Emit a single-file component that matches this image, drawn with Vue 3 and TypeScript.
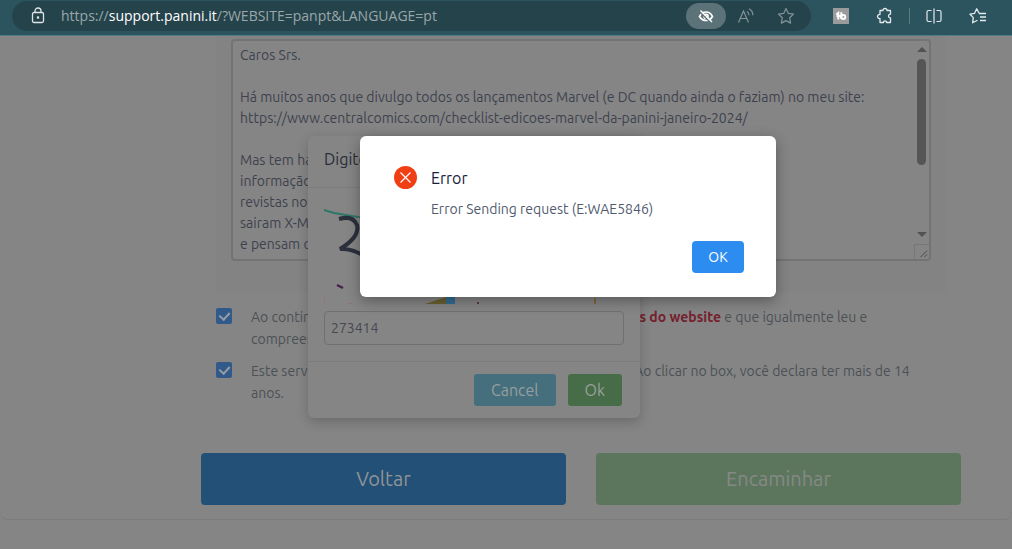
<script setup lang="ts">
import { ref } from 'vue'

const request = ref(`Caros Srs.

Há muitos anos que divulgo todos os lançamentos Marvel (e DC quando ainda o faziam) no meu site:
https://www.centralcomics.com/checklist-edicoes-marvel-da-panini-janeiro-2024/

Mas tem havido falta de comunicação, e há meses que a Panini já não nos manda a
informação das edições com a antecedência, e os leitores é que dizem que já sairam
revistas nos quiosques que nunca divulgaram. Muita gente está convencida que
sairam X-Men e outras revistas que foram anunciadas antes, mas nunca sairam,
e pensam que a culpa é dos sites de divulgação, e as lojas também não`)
const code = ref('273414')
const terms = ref(true)
const adult = ref(true)
</script>

<template>
  <div class="screen">
    <header class="toolbar">
      <div class="address">
        <svg class="lock" width="14" height="18" viewBox="0 0 14 18" fill="none" stroke="#dfe5e6" stroke-width="1.3">
          <rect x="1.5" y="5.500" width="11" height="10" rx="1.500" />
          <path d="M4 5.500V4a3 3 0 0 1 6 0v1.500" />
          <rect x="6.500" y="10" width="1" height="1" />
        </svg>
        <span class="url">https://<b>support.panini.it</b>/?WEBSITE=panpt&amp;LANGUAGE=pt</span>
        <button class="tool pill" aria-label="Tracking">
          <svg width="16" height="16" viewBox="0 0 16 16" fill="none" stroke="#fff" stroke-width="1.700">
            <path d="M1.500 8.500C3 5.300 5.200 4 8 4s5 1.300 6.500 4.500C13 11 11 12.500 8 12.500S3 11 1.500 8.500z" />
            <circle cx="8" cy="8.300" r="2" />
            <path d="M1.500 3.500l11 11" stroke="#5b7278" stroke-width="1.500" />
            <path d="M2.500 2.500l11.500 11.500" stroke-width="1.400" />
          </svg>
        </button>
        <button class="tool" aria-label="Read aloud">
          <svg width="18" height="18" viewBox="0 0 18 18" fill="none" stroke="#829397" stroke-width="1.200">
            <path d="M1.500 15.500L6.500 4L11.500 15.500M3.500 11.500h6M10 4.500q2 1.200 2 3.800M12 1.800q4 2 3.800 6.500" />
          </svg>
        </button>
        <button class="tool" aria-label="Favourite">
          <svg width="18" height="18" viewBox="0 0 18 18" fill="none" stroke="#829397" stroke-width="1.200" stroke-linejoin="round">
            <path d="M9 1.500l2.300 4.900 5.200.7-3.800 3.700.9 5.300L9 13.600l-4.600 2.500.9-5.300L1.500 7.100l5.200-.7z" />
          </svg>
        </button>
      </div>
      <nav class="extras">
        <button class="tool" aria-label="Extension">
          <svg width="16" height="16" viewBox="0 0 16 16">
            <rect width="16" height="16" fill="#9b9b9b" />
            <path d="M3.300 6.500L5.300 5v6.500M3.500 8h4M8.300 4.200v6.800" fill="none" stroke="#fff" stroke-width="2" />
            <circle cx="10.300" cy="9" r="2" fill="none" stroke="#fff" stroke-width="1.900" />
          </svg>
        </button>
        <button class="tool" aria-label="Extensions">
          <svg width="18" height="18" viewBox="0 0 18 18" fill="none" stroke="#e4eaeb" stroke-width="1.300" stroke-linejoin="round">
            <path d="M4 3.500h3c-.5-2.700 4.500-2.700 4 0h3.500v3.700c-2.600-.4-2.600 4 0 3.600v4.700h-4c.4-2.300-3.400-2.300-3 0H4v-4c-3.300.6-3.300-4.600 0-4z" />
          </svg>
        </button>
        <i class="rule"></i>
        <button class="tool" aria-label="Split screen">
          <svg width="16" height="16" viewBox="0 0 16 16" fill="none" stroke="#e4eaeb" stroke-width="1.200">
            <path d="M5.500 2.500h-3a1.500 1.500 0 0 0-1.500 1.500v8a1.500 1.500 0 0 0 1.500 1.500h3M10.500 2.500h3a1.500 1.500 0 0 1 1.500 1.500v8a1.500 1.500 0 0 1-1.500 1.500h-3M8 .500v15" />
          </svg>
        </button>
        <button class="tool" aria-label="Favourites">
          <svg width="18" height="18" viewBox="0 0 18 18" fill="none" stroke="#e4eaeb" stroke-width="1.300" stroke-linejoin="round">
            <path d="M10 6L7.700 1.700L5.600 6.300L1 7.200L4.300 10.600L3.600 15.800L8.500 13.200M9.800 6.500H17M11 10H17M11 13.500H17" />
          </svg>
        </button>
      </nav>
    </header>

    <main class="page">
      <section class="card">
        <div class="panel">
          <div class="editor">
            <textarea v-model="request" rows="10" aria-label="Request" wrap="off"></textarea>
            <div class="track" aria-hidden="true">
              <i class="up"></i>
              <i class="thumb"></i>
              <i class="down"></i>
              <svg class="grip" width="15" height="15" viewBox="0 0 15 15" fill="none" stroke="#454545">
                <path d="M6 13L13 6M10 13L13 10" />
              </svg>
            </div>
          </div>
        </div>

        <div class="checks">
          <label class="check">
            <input v-model="terms" type="checkbox" />
            <span>Ao continuar, declara que leu e aceita os termos e as <a href="#">condições do website</a> e que igualmente leu e<br />compreendeu a política de privacidade.</span>
          </label>
          <label class="check">
            <input v-model="adult" type="checkbox" />
            <span>Este serviço é reservado aos utilizadores maiores de 14 anos. Ao clicar no box, você declara ter mais de 14<br />anos.</span>
          </label>
        </div>

        <div class="actions">
          <button class="back">Voltar</button>
          <button class="send">Encaminhar</button>
        </div>
      </section>
    </main>

    <section class="captcha" role="dialog" aria-label="Captcha">
      <h2>Digite o código</h2>
      <div class="captcha-body">
        <svg class="picture" width="300" height="100" viewBox="0 0 300 100" fill="none">
          <path d="M0 6L10 9L40 14L90 16" stroke="#2f7568" stroke-width="2" />
          <path d="M15 15q14-4 18 6q3 12-17 24q12-1 26 8" stroke="#2b303c" stroke-width="4" />
          <path d="M13 81l6 3" stroke="#4b2050" stroke-width="2.500" />
          <path d="M101 100L122 93V100z" fill="#6a6130" />
          <path d="M122 93h9v7h-9z" fill="#326c94" />
          <path d="M153 98h2v2h-2z" fill="#5b3c48" />
          <path d="M271 94v6" stroke="#80683f" stroke-width="2" />
          <path d="M0 93v7M24 100h5" stroke="#8d7777" stroke-width="2" />
        </svg>
        <input v-model="code" type="text" aria-label="Código" />
      </div>
      <footer>
        <button class="cancel">Cancel</button>
        <button class="confirm">Ok</button>
      </footer>
    </section>

    <section class="alert" role="alertdialog" aria-labelledby="alert-title">
      <svg class="cross" width="23" height="23" viewBox="0 0 23 23" fill="none">
        <circle cx="11.500" cy="11.500" r="11.500" fill="#f03f14" />
        <path d="M6.500 6.500l10 10M16.500 6.500l-10 10" stroke="#fff" stroke-width="1.200" />
      </svg>
      <div class="message">
        <h1 id="alert-title">Error</h1>
        <p>Error Sending request (E:WAE5846)</p>
      </div>
      <button class="ok">OK</button>
    </section>
  </div>
</template>

<style>
body {
  background: #858585;
}
</style>

<style scoped>
.screen,
.screen * {
  box-sizing: border-box;
}
.screen {
  position: relative;
  min-height: 100vh;
  overflow: hidden;
  background: #858585;
  color: #4c5155;
  font: 14px/22px "Ubuntu", "Noto Sans", sans-serif;
}
button,
input,
textarea {
  margin: 0;
  border: 0;
  padding: 0;
  font: inherit;
}
.toolbar {
  display: flex;
  height: 36px;
  padding-left: 12px;
  background: #2c545e;
  border-bottom: 1px solid #4e7d87;
}
.address {
  flex: 1;
  display: flex;
  align-items: center;
  height: 30px;
  margin-top: 1px;
  padding: 0 5px 0 19px;
  border-radius: 15px;
  background: #25434b;
}
.url {
  flex: 1;
  margin-left: 16px;
  color: #9aa7aa;
  font: 14px/20px "Segoe UI", "Open Sans", sans-serif;
}
.url b {
  color: #fff;
  font-weight: 400;
}
.tool {
  display: flex;
  align-items: center;
  justify-content: center;
  width: 40px;
  height: 30px;
  background: none;
}
.pill {
  height: 26px;
  border-radius: 13px;
  background: #5b7278;
}
.extras {
  display: flex;
  align-items: center;
  height: 32px;
  padding: 0 12px 0 8px;
}
.extras .tool {
  width: 44px;
}
.rule {
  width: 1px;
  height: 16px;
  background: #5d7d84;
  margin: 0 2px;
}
.page {
  padding-bottom: 29px;
}
.card {
  padding: 0 51px 14px 201px;
  border-bottom: 1px solid #7b7b7b;
  border-radius: 0 0 8px 8px;
}
.panel {
  margin: 0 15px;
  padding: 3px 15px 31px;
  background: #838383;
}
.editor {
  display: flex;
  border: 2px solid #737373;
  border-radius: 4px;
  background: #858585;
}
.editor textarea {
  flex: 1;
  min-width: 0;
  padding: 4px 0 4px 7px;
  overflow: hidden;
  resize: none;
  background: none;
  color: #3e424d;
  line-height: 21px;
  white-space: pre;
}
.track {
  display: flex;
  flex-direction: column;
  align-items: center;
  width: 15px;
  padding-top: 6px;
}
.up,
.down {
  border: 5px solid transparent;
  border-top-width: 0;
  border-bottom: 5px solid #535353;
}
.down {
  margin: auto 0 7px;
  transform: rotate(180deg);
}
.thumb {
  width: 9px;
  height: 106px;
  margin-top: 7px;
  border-radius: 5px;
  background: #555;
}
.grip {
  border: 1px solid #777;
  border-width: 1px 0 0 1px;
}
.checks {
  display: grid;
  gap: 10px;
  margin: 14px 15px 49px;
}
.check {
  display: flex;
  gap: 19px;
  white-space: nowrap;
}
.check input {
  appearance: none;
  flex: none;
  width: 16px;
  height: 16px;
  margin-top: 2px;
  border-radius: 2px;
  background: #315a8b;
}
.check input:checked::after {
  content: "";
  display: block;
  width: 5px;
  height: 8px;
  margin: 2px auto 0;
  border: solid #999da3;
  border-width: 0 2px 2px 0;
  transform: rotate(42deg);
}
.check a {
  color: #75202e;
  font-weight: 700;
  text-decoration: none;
}
.actions {
  display: grid;
  grid-template-columns: 1fr 1fr;
  gap: 30px;
}
.actions button {
  height: 52px;
  border-radius: 4px;
  font-size: 20px;
}
.back {
  background: #225077;
  color: #919395;
}
.send {
  background: #5c765d;
  color: #858985;
}
.captcha {
  position: absolute;
  top: 136px;
  left: 308px;
  width: 332px;
  border-radius: 6px;
  background: #858585;
  box-shadow: 0 4px 12px #0003;
}
.captcha h2 {
  margin: 0;
  padding: 12px 16px 17px;
  border-bottom: 1px solid #7b7b7b;
  color: #292d38;
  font-size: 16px;
  font-weight: 400;
}
.captcha-body {
  display: grid;
  gap: 7px;
  padding: 16px;
}
.picture {
  display: block;
}
.captcha input {
  width: 100%;
  height: 34px;
  padding: 0 6px;
  border: 1px solid #6f7073;
  border-radius: 4px;
  background: #858585;
  color: #454951;
}
.captcha footer {
  display: flex;
  justify-content: flex-end;
  gap: 12px;
  padding: 12px 18px 12px;
  border-top: 1px solid #7b7b7b;
}
.captcha button {
  height: 32px;
  padding: 0 17px;
  border-radius: 3px;
  font-size: 16px;
}
.cancel {
  background: #456f7d;
  color: #989ea0;
}
.confirm {
  background: #476c48;
  color: #9aa09a;
}
.alert {
  position: absolute;
  top: 136px;
  left: 360px;
  display: grid;
  grid-template-columns: 23px 1fr;
  gap: 20px 14px;
  width: 416px;
  padding: 30px 32px 24px 34px;
  border-radius: 6px;
  background: #fff;
  box-shadow: 0 4px 14px #0005;
}
.alert h1 {
  margin: 0 0 8px;
  color: #17233d;
  font-size: 16px;
  font-weight: 400;
  line-height: 24px;
}
.alert p {
  margin: 0;
  color: #515a6e;
  line-height: 23px;
}
.ok {
  grid-column: 2;
  justify-self: end;
  width: 52px;
  height: 32px;
  border-radius: 4px;
  background: #2d8cf0;
  color: #fff;
}
</style>
